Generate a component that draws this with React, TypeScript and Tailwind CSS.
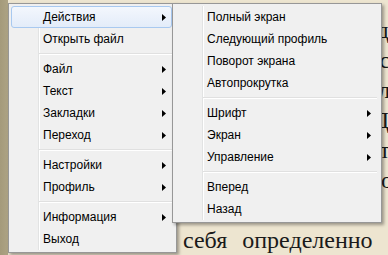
import clsx from "clsx";

type Entry = { label: string; sub?: boolean; active?: boolean } | "sep";

const mainMenu: Entry[] = [
  { label: "Действия", sub: true, active: true },
  { label: "Открыть файл" },
  "sep",
  { label: "Файл", sub: true },
  { label: "Текст", sub: true },
  { label: "Закладки", sub: true },
  { label: "Переход", sub: true },
  "sep",
  { label: "Настройки", sub: true },
  { label: "Профиль", sub: true },
  "sep",
  { label: "Информация", sub: true },
  { label: "Выход" },
];

const actionsMenu: Entry[] = [
  { label: "Полный экран" },
  { label: "Следующий профиль" },
  { label: "Поворот экрана" },
  { label: "Автопрокрутка" },
  "sep",
  { label: "Шрифт", sub: true },
  { label: "Экран", sub: true },
  { label: "Управление", sub: true },
  "sep",
  { label: "Вперед" },
  { label: "Назад" },
];

// page text behind the menus, only the line ends peek out on the right
const pageLines = ["ду", "се", "ла", "До", "та", "о)", "с"];

function Arrow() {
  return (
    <svg width="4" height="7" viewBox="0 0 4 7" className="shrink-0">
      <path d="M0 0L4 3.5L0 7Z" fill="#000" />
    </svg>
  );
}

function Menu({ items, className }: { items: Entry[]; className: string }) {
  return (
    <div
      className={clsx(
        "absolute border border-[#979797] bg-[#f0f0f0] pt-[2px] pb-[2px] pl-[2px] pr-[4px] shadow-[2px_2px_3px_rgba(0,0,0,0.35)]",
        className
      )}
    >
      <div className="relative">
        {/* gutter */}
        <div className="absolute left-[27px] top-0 bottom-0 w-[2px] border-l border-r border-l-[#e2e3e3] border-r-white" />
        {items.map((it, i) =>
          it === "sep" ? (
            <div key={i} className="relative ml-[28px] h-[8px] flex flex-col justify-center">
              <div className="h-px bg-[#e0e0e0]" />
              <div className="h-px bg-white" />
            </div>
          ) : (
            <div
              key={i}
              className={clsx(
                "relative flex items-center h-[22px] pl-[31px] pr-[5px] border rounded-[3px]",
                it.active
                  ? "border-[#a8c9f0] bg-gradient-to-b from-[#f3f7fd] to-[#e3ecf9]"
                  : "border-transparent"
              )}
            >
              <span className="flex-1 whitespace-nowrap">{it.label}</span>
              {it.sub && <Arrow />}
            </div>
          )
        )}
      </div>
    </div>
  );
}

export default function App() {
  return (
    <div className="relative w-[388px] h-[255px] overflow-hidden flex bg-[#ede5d0]">
      <div className="w-[8px] h-full bg-gradient-to-r from-[#a49a7b] to-[#ada384]" />
      <div className="flex-1 min-w-0 flex flex-col justify-end font-['Liberation_Serif',serif] text-[24px] leading-[30px] text-[#1a1a1a]">
        {pageLines.map((l, i) => (
          <div key={i} className="whitespace-nowrap flex justify-end -mr-[13px]">
            {l}
          </div>
        ))}
        <div className="whitespace-nowrap pl-[175px] [word-spacing:9px]">себя определенно</div>
      </div>

      <div className="font-['Liberation_Sans',Arial,sans-serif] text-[12px] text-black">
        <Menu items={mainMenu} className="left-[8px] top-[3px] w-[169px] h-[250px]" />
        <Menu items={actionsMenu} className="left-[172px] top-[3px] w-[210px] h-[220px]" />
      </div>
    </div>
  );
}
